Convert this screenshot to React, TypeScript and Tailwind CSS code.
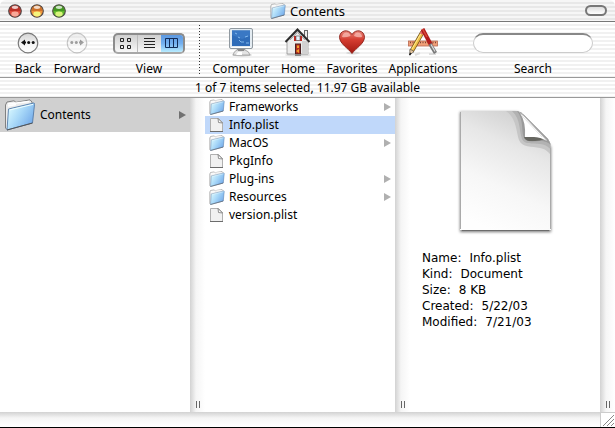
import type { ReactNode } from "react";

type Entry = { name: string; kind: "folder" | "file" };

const entries: Entry[] = [
  { name: "Frameworks", kind: "folder" },
  { name: "Info.plist", kind: "file" },
  { name: "MacOS", kind: "folder" },
  { name: "PkgInfo", kind: "file" },
  { name: "Plug-ins", kind: "folder" },
  { name: "Resources", kind: "folder" },
  { name: "version.plist", kind: "file" },
];

const details = [
  { label: "Name", value: "Info.plist" },
  { label: "Kind", value: "Document" },
  { label: "Size", value: "8 KB" },
  { label: "Created", value: "5/22/03" },
  { label: "Modified", value: "7/21/03" },
];

const lights = [
  { name: "Close", dark: "#a01c14", mid: "#dc4a3c", light: "#f8a898" },
  { name: "Minimize", dark: "#b0541c", mid: "#f0943c", light: "#f4f47c" },
  { name: "Zoom", dark: "#2c7c18", mid: "#60b82c", light: "#d8f47c" },
];

const FolderIcon = ({ className }: { className: string }) => (
  <svg viewBox="0 0 32 32" className={className} aria-hidden="true">
    <defs>
      <linearGradient id="folderFront" x1="0" y1="0.2" x2="1" y2="0.8">
        <stop offset="0" stopColor="#dcfaff" />
        <stop offset="0.45" stopColor="#a8d8f8" />
        <stop offset="1" stopColor="#6ca4e8" />
      </linearGradient>
    </defs>
    <path
      d="M1.5 6 L3 3 L10 1.8 L12 3.4 L26 0.8 L28 3 L28 24 L3 30.5 L1.5 29 Z"
      fill="#ececec"
      stroke="#808080"
      strokeWidth="1"
    />
    <path d="M4 5 L25 2.5 M4 7 L12 5.5" stroke="#fff" strokeWidth="1.5" fill="none" />
    <path
      d="M4.5 10 L29.5 4 Q30.8 4 30.5 5.5 L28.5 24 L3 31 Z"
      fill="url(#folderFront)"
      stroke="#557ca8"
      strokeWidth="0.9"
    />
    <path d="M5.5 11 L29 5.4" stroke="#f0ffff" strokeWidth="1" />
    <path d="M3 31 L28.5 24" stroke="#555" strokeWidth="1" />
  </svg>
);

const FileIcon = () => (
  <svg viewBox="0 0 16 16" className="size-4" aria-hidden="true">
    <path d="M1.5 1.5 H9.5 L13.5 5.5 V14.5 H1.5 Z" fill="#f1f1f1" stroke="#b0b0b0" />
    <path d="M1 14.5 H14" stroke="#6c6c6c" />
    <path d="M9 1.5 L13.5 6 L9.5 5.5 Z" fill="#fff" stroke="#777" strokeWidth="0.8" />
  </svg>
);

const DocumentPreview = () => (
  <svg viewBox="0 0 98 130" className="h-[130px] w-[98px]" aria-hidden="true">
    <defs>
      <linearGradient id="page" x1="0.7" y1="0" x2="0.35" y2="1">
        <stop offset="0" stopColor="#cecece" />
        <stop offset="0.3" stopColor="#e7e7e7" />
        <stop offset="0.65" stopColor="#f7f7f7" />
        <stop offset="1" stopColor="#fefefe" />
      </linearGradient>
      <filter id="soft" x="-20%" y="-20%" width="140%" height="140%">
        <feGaussianBlur stdDeviation="1.6" />
      </filter>
      <clipPath id="sheet">
        <path d="M4 5 H61 Q65 6 68 9 L92 33 Q95 37 95 42 V124 H4 Z" />
      </clipPath>
    </defs>
    <path d="M4 6 H61 L95 41 V126 H4 Z" fill="#777" filter="url(#soft)" />
    <path d="M4 5 H61 Q65 6 68 9 L92 33 Q95 37 95 42 V124 H4 Z" fill="url(#page)" />
    <g clipPath="url(#sheet)">
      <path d="M50 5 C61 13 60 26 63 34 C66 42 76 40 84 42 C90 43 93 47 96 50 V30 L60 0 Z" fill="#c6c6c6" />
      <path d="M56 5 C65 13 63 26 66 33 C69 39 76 37 84 38 C90 39 93 41 96 45 V30 L60 0 Z" fill="#b2b2b2" />
      <path d="M61 5 C68 13 65 26 68 32 C71 37 78 35 84 35 C90 35 93 37 96 40 V30 L66 0 Z" fill="#9a9a9a" />
    </g>
    <path d="M68 31 H78 Q84 31 88 33 Q84 35 79 35 H73 Q69 34 68 31 Z" fill="#666660" />
    <path d="M64 7 Q70 16 69 31 H78 Q84 31 91 35 L68 10 Z" fill="#fff" />
    <path d="M63 6 L68 10 L91 34" fill="none" stroke="#b4b4b4" />
    <path d="M66 10 L86 31" stroke="#e4e4e4" />
    <path d="M4.5 6 V123 M94.5 42 V123" stroke="#aaa" />
    <path d="M6 124.5 H93" stroke="#6c6c6c" />
  </svg>
);

const ComputerIcon = () => (
  <svg viewBox="0 0 32 32" className="size-8" aria-hidden="true">
    <ellipse cx="17" cy="28" rx="10" ry="1.5" fill="#ccc" />
    <path d="M13 21 H19 L20 23 Q24 24 25 28 H8 Q9 24 12 23 Z" fill="#e4e4e4" stroke="#999" strokeWidth="0.8" />
    <path d="M12 22 H20 L19 24 H13 Z" fill="#8a8a8a" />
    <path d="M13 25 H17 V28 H11 Z" fill="#fff" />
    <rect x="4.5" y="1.5" width="23" height="20" rx="1.5" fill="#e4ecf2" stroke="#9099a0" />
    <rect x="7" y="3.5" width="18" height="15.5" fill="#2f6cb8" />
    <path d="M7 3.5 H25 V9 L17 12 L7 8 Z" fill="#3a78c4" />
    <path
      d="M10 6 L12 7 M13 10 L15 11 M14 13 L16 15 H19 M20 10 L23 9 M21 16 H24"
      stroke="#82b8ec"
      fill="none"
      strokeWidth="1"
    />
    <path d="M6 20.5 H26" stroke="#fff" />
  </svg>
);

const HomeIcon = () => (
  <svg viewBox="0 0 32 32" className="size-8" aria-hidden="true">
    <ellipse cx="16" cy="28" rx="13" ry="1.5" fill="#ddd" />
    <rect x="22.5" y="3.5" width="3" height="9" fill="#eee" stroke="#666" />
    <path d="M5 14 L15.5 4 L26 14 V27 H5 Z" fill="#ececec" stroke="#888" strokeWidth="0.7" />
    <path d="M20 14 H26 V27 H20 Z" fill="#d2d2d2" />
    <path d="M3.5 15 L15.5 2.5 L27.5 15" fill="none" stroke="#2c2c2c" strokeWidth="2" />
    <path d="M8 13 L15.5 5.5 L23 13" fill="none" stroke="#aaa" />
    <rect x="12" y="9" width="8" height="5" fill="#c42820" />
    <rect x="14" y="9" width="4" height="4.5" fill="#e8f4ff" stroke="#555" strokeWidth="0.6" />
    <rect x="13.5" y="17" width="5" height="10" fill="#b03020" stroke="#4c2020" />
    <path d="M15 18.5 H17 V21 H15 Z M14 24 L17 22 V26 Z" fill="#f0a030" />
    <path d="M13 28 H19" stroke="#888" strokeWidth="2" />
  </svg>
);

const HeartIcon = () => (
  <svg viewBox="0 0 32 32" className="size-8" aria-hidden="true">
    <defs>
      <linearGradient id="heart" x1="0" y1="0" x2="0" y2="1">
        <stop offset="0" stopColor="#e88478" />
        <stop offset="0.4" stopColor="#d43c30" />
        <stop offset="1" stopColor="#a01810" />
      </linearGradient>
    </defs>
    <ellipse cx="17" cy="26" rx="7" ry="1.5" fill="#d8d8d8" />
    <path
      d="M16 26.5 C12 21 4 17 3.5 10.5 C3.5 3 12.5 1.5 16 7.5 C19.5 1.5 28.5 3 28.5 10.5 C28 17 20 21 16 26.5 Z"
      fill="url(#heart)"
      stroke="#8c2018"
      strokeWidth="0.9"
    />
    <path
      d="M6 10 Q7 5 11 5.5 Q14 6 14.5 9 Q9 11 6 10 Z M18 9 Q19 5 22 5.5 Q26 6 26 10 Q22 11 18 9 Z"
      fill="#f8bcb4"
      opacity="0.75"
    />
  </svg>
);

const ApplicationsIcon = () => (
  <svg viewBox="0 0 32 32" className="size-8" aria-hidden="true">
    <path d="M8 28 L13 26 M22 27 H29" stroke="#ddd" strokeWidth="2" />
    <rect x="1.5" y="14" width="29" height="5" fill="#f0a078" stroke="#b86850" strokeWidth="0.8" />
    <path d="M3 15.5 H30" stroke="#7c4438" strokeDasharray="1 1.5" strokeWidth="1.5" />
    <path d="M15.5 5 L4.5 24.5" stroke="#705018" strokeWidth="4.5" />
    <path d="M15 6 L5 23.5" stroke="#f0c048" strokeWidth="3" />
    <path d="M14.5 5.5 L5 22" stroke="#ffec90" strokeWidth="1" />
    <path d="M3 22 L7 24.5 L2.5 28 Z" fill="#e8c8a0" stroke="#444" strokeWidth="0.6" />
    <path d="M2.5 28 L4 26" stroke="#222" strokeWidth="1.5" />
    <path d="M14 7 L16.5 3" stroke="#e06868" strokeWidth="3" />
    <path d="M15.5 2 L24 18" stroke="#b01c1c" strokeWidth="4" />
    <path d="M15.5 2 L20 10" stroke="#d84838" strokeWidth="1.5" />
    <path d="M23 17 L28.5 26" stroke="#777" strokeWidth="3.5" />
    <path d="M24 17.5 L28 24.5" stroke="#ddd" strokeWidth="1.2" />
  </svg>
);

const NavIcon = ({ forward = false }: { forward?: boolean }) => (
  <svg
    viewBox="0 0 22 22"
    className={forward ? "size-[22px] -scale-x-100 opacity-40" : "size-[22px]"}
    aria-hidden="true"
  >
    <defs>
      <linearGradient id="navFace" x1="0" y1="0" x2="0" y2="1">
        <stop offset="0" stopColor="#d4d4d4" />
        <stop offset="0.6" stopColor="#f6f6f6" />
        <stop offset="1" stopColor="#fff" />
      </linearGradient>
    </defs>
    <circle cx="11" cy="11" r="9.8" fill="url(#navFace)" stroke="#777" strokeWidth="1.2" />
    <path d="M4 10.5 L8 7.5 V13.5 Z M8 9.5 H9 V11.5 H8 Z" fill="#111" />
    <circle cx="11.7" cy="10.5" r="1.5" fill="#111" />
    <circle cx="16.2" cy="10.5" r="1.5" fill="#111" />
  </svg>
);

const Triangle = ({ className }: { className: string }) => (
  <svg viewBox="0 0 7 8" className={`h-2 w-[7px] ${className}`} aria-hidden="true">
    <path d="M0 0 L7 4 L0 8 Z" fill="currentColor" />
  </svg>
);

const Gutter = () => (
  <div className="flex w-[15px] shrink-0 items-end justify-center bg-linear-to-r from-[#d2d2d2] via-[#f5f5f5] via-40% to-white pb-1">
    <div className="h-[7px] w-1 border-x border-[#666]" />
  </div>
);

const ToolbarItem = ({ label, className, children }: { label: string; className: string; children: ReactNode }) => (
  <button className={`flex flex-col items-center ${className}`}>
    <span className="flex h-9 items-center justify-center">{children}</span>
    <span className="leading-4">{label}</span>
  </button>
);

const TitleBar = () => (
  <header className="relative flex h-[22px] shrink-0 items-center justify-between rounded-t-md border-b border-[#777] bg-[repeating-linear-gradient(180deg,#f6f6f6_0_2px,#e8e8e8_2px_4px)] px-2">
    <div className="flex gap-2">
      {lights.map((light) => (
        <button key={light.name} aria-label={light.name}>
          <svg viewBox="0 0 14 14" className="size-[14px]" aria-hidden="true">
            <circle cx="7" cy="7" r="6.3" fill={light.mid} stroke="#4a4444" strokeWidth="1.1" />
            <path d="M1.5 7 A5.5 5.5 0 0 1 12.5 7 Z" fill={light.dark} opacity="0.55" />
            <ellipse cx="7" cy="3.3" rx="3.2" ry="1.6" fill="#fff" opacity="0.75" />
            <ellipse cx="7" cy="10" rx="3.7" ry="2.4" fill={light.light} />
          </svg>
        </button>
      ))}
    </div>
    <h1 className="absolute inset-x-0 flex items-center justify-center gap-1 text-[13px] leading-5">
      <FolderIcon className="size-4" />
      Contents
    </h1>
    <button
      aria-label="Toggle toolbar"
      className="relative h-[11px] w-[22px] rounded-full border-2 border-[#777] bg-linear-to-b from-[#ddd] to-white"
    />
  </header>
);

const Toolbar = () => (
  <div className="flex h-14 shrink-0 border-b border-[#999] bg-[repeating-linear-gradient(180deg,#fff_0_2px,#f1f1f1_2px_4px)] pt-[3px] pl-1">
    <ToolbarItem label="Back" className="w-12">
      <NavIcon />
    </ToolbarItem>
    <ToolbarItem label="Forward" className="w-[50px]">
      <NavIcon forward />
    </ToolbarItem>
    <div className="flex w-[94px] flex-col items-center">
      <div className="flex h-9 items-center">
        <div className="flex h-[21px] w-[72px] overflow-hidden rounded-[5px] border-2 border-[#8c8c8c] border-b-[#a8a8a8] bg-linear-to-b from-[#d0d0d0] to-[#f8f8f8]">
          <button aria-label="Icon view" className="flex flex-1 items-center justify-center border-r border-[#bbb]">
            <svg viewBox="0 0 12 11" className="h-[11px] w-3" fill="none" stroke="#222" aria-hidden="true">
              <path d="M0.5 0.5 H3.5 V3.5 H0.5 Z M7.5 0.5 H10.5 V3.5 H7.5 Z M0.5 7.5 H3.5 V10.5 H0.5 Z M7.5 7.5 H10.5 V10.5 H7.5 Z" />
            </svg>
          </button>
          <button aria-label="List view" className="flex flex-1 items-center justify-center">
            <svg viewBox="0 0 11 11" className="size-[11px]" stroke="#222" aria-hidden="true">
              <path d="M0 0.5 H11 M0 3.5 H11 M0 6.5 H11 M0 9.5 H11" />
            </svg>
          </button>
          <button
            aria-label="Column view"
            className="flex flex-1 items-center justify-center bg-linear-to-b from-[#5c98e0] via-[#74b0f0] to-[#b8ecff]"
          >
            <svg viewBox="0 0 13 11" className="h-[11px] w-[13px]" fill="none" stroke="#122c58" aria-hidden="true">
              <path d="M0.5 0.5 H12.5 V9.5 H0.5 Z M4.5 0.5 V9.5 M8.5 0.5 V9.5" />
            </svg>
          </button>
        </div>
      </div>
      <span className="leading-4">View</span>
    </div>
    <div className="mr-3 ml-[3px] h-[50px] w-px bg-[repeating-linear-gradient(180deg,#333_0_1px,transparent_1px_3px)]" />
    <ToolbarItem label="Computer" className="w-[58px]">
      <ComputerIcon />
    </ToolbarItem>
    <ToolbarItem label="Home" className="w-14">
      <HomeIcon />
    </ToolbarItem>
    <ToolbarItem label="Favorites" className="w-[52px]">
      <HeartIcon />
    </ToolbarItem>
    <ToolbarItem label="Applications" className="w-[90px]">
      <ApplicationsIcon />
    </ToolbarItem>
    <div className="flex flex-1 flex-col items-center pr-[22px] pl-[5px]">
      <div className="flex h-9 w-full items-center">
        <input
          id="search"
          type="text"
          className="h-5 w-full rounded-full border border-t-2 border-[#ccc] border-t-[#888] bg-white px-3 outline-none"
        />
      </div>
      <label htmlFor="search" className="leading-4">
        Search
      </label>
    </div>
  </div>
);

const App = () => {
  return (
    <div className="flex h-screen flex-col overflow-hidden border-b border-black bg-white font-['Noto_Sans',sans-serif] text-xs text-black">
      <TitleBar />
      <Toolbar />
      <div className="h-5 shrink-0 border-b border-[#999] bg-[repeating-linear-gradient(180deg,#fff_0_2px,#f1f1f1_2px_4px)] text-center leading-5">
        1 of 7 items selected, 11.97 GB available
      </div>
      <main className="flex min-h-0 flex-1">
        <div className="min-w-0 flex-1">
          <button className="flex h-[34px] w-full items-center bg-[#d0d0d0] px-1 text-left">
            <FolderIcon className="size-8" />
            <span className="ml-1 flex-1">Contents</span>
            <Triangle className="text-[#707070]" />
          </button>
        </div>
        <Gutter />
        <ul className="min-w-0 flex-1">
          {entries.map((entry) => (
            <li key={entry.name}>
              <button
                className={`flex h-[18px] w-full items-center px-1 text-left leading-[18px] ${
                  entry.name === "Info.plist" ? "bg-[#c0d8fa]" : ""
                }`}
              >
                {entry.kind === "folder" ? <FolderIcon className="size-4" /> : <FileIcon />}
                <span className="ml-1 flex-1">{entry.name}</span>
                {entry.kind === "folder" && <Triangle className="text-[#b0b0b0]" />}
              </button>
            </li>
          ))}
        </ul>
        <Gutter />
        <section className="min-w-0 flex-1 pt-2">
          <div className="flex justify-center">
            <DocumentPreview />
          </div>
          <dl className="mt-[14px] pl-3 font-['DejaVu_Sans',sans-serif] text-xs leading-4">
            {details.map((item) => (
              <div key={item.label} className="flex gap-2">
                <dt>{item.label}:</dt>
                <dd>{item.value}</dd>
              </div>
            ))}
          </dl>
        </section>
        <Gutter />
      </main>
      <footer className="flex h-[15px] shrink-0">
        <div className="flex-1 bg-linear-to-b from-[#d2d2d2] via-[#f5f5f5] via-40% to-white" />
        <div className="w-[15px] border-t border-l border-[#ccc]">
          <svg viewBox="0 0 14 14" className="size-[14px]" stroke="#888" aria-hidden="true">
            <path d="M2 13 L13 2 M6 13 L13 6 M10 13 L13 10" />
          </svg>
        </div>
      </footer>
    </div>
  );
};

export default App;
